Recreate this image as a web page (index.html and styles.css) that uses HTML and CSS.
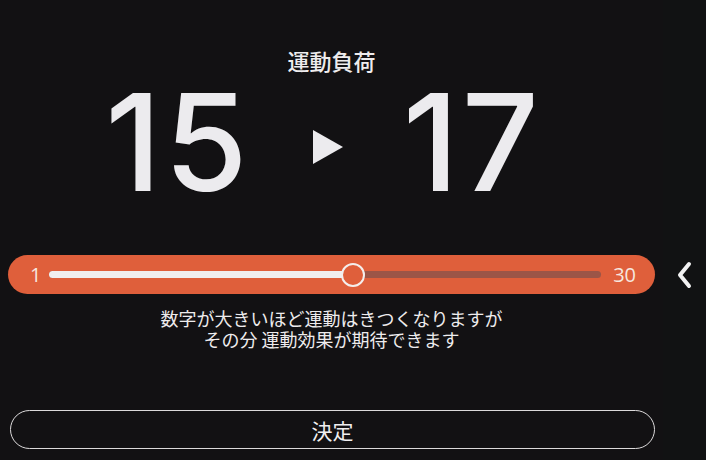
FILE: index.html
```html
<!DOCTYPE html>
<html lang="ja">
<head>
<meta charset="utf-8">
<link rel="stylesheet" href="styles.css">
</head>
<body>
<div class="page">
  <main class="main">
    <h1 class="title">運動負荷</h1>
    <div class="values">
      <span class="num">15</span>
      <span class="arrow"></span>
      <span class="num">17</span>
    </div>
    <div class="slider">
      <span class="lbl lbl-min">1</span>
      <div class="track">
        <div class="fill" style="width: 55%"></div>
        <div class="thumb" style="left: 55%"></div>
      </div>
      <span class="lbl lbl-max">30</span>
    </div>
    <p class="desc">数字が大きいほど運動はきつくなりますが<br>その分 運動効果が期待できます</p>
    <button class="ok">決定</button>
  </main>
  <aside class="side">
    <svg class="chev" width="18" height="30" viewBox="0 0 18 30"><path d="M14 4 L5 15 L14 26" fill="none" stroke="#f2f2f2" stroke-width="4" stroke-linecap="round" stroke-linejoin="round"/></svg>
  </aside>
</div>
</body>
</html>
```
FILE: styles.css
```css
* { box-sizing: border-box; }
html, body { margin: 0; padding: 0; }
body {
  background: #121113;
  color: #eeeced;
  font-family: "Noto Sans CJK JP", "Noto Sans", sans-serif;
  width: 706px;
  height: 460px;
  overflow: hidden;
}
.page { display: flex; height: 460px; }
.main {
  width: 663px;
  padding: 45px 8px 0 8px;
  display: flex;
  flex-direction: column;
  align-items: stretch;
}
.side {
  flex: 1;
  background: #111213;
  padding: 260px 0 0 12px;
}
.title {
  margin: 0;
  font-size: 22px;
  line-height: 30px;
  font-weight: 500;
  text-align: center;
}
.values {
  margin-top: -2px;
  display: flex;
  justify-content: center;
  align-items: center;
  font-family: "Inter", "Open Sans", sans-serif;
  font-weight: 450;
  font-size: 135px;
  line-height: 1;
  height: 138px;
  color: #ecebee;
  padding-right: 16px;
}
.num { display: block; letter-spacing: 3px; }
.arrow {
  width: 0; height: 0;
  border-left: 30px solid #ecebee;
  border-top: 17px solid transparent;
  border-bottom: 17px solid transparent;
  margin: 10px 60px 0 62px;
}
.slider {
  margin-top: 44px;
  height: 39px;
  border-radius: 20px;
  background: #df5f3b;
  display: flex;
  align-items: center;
  padding: 0 19px 0 22px;
  font-family: "Open Sans", sans-serif;
  font-size: 20px;
  color: #f6e6df;
}
.lbl-min { margin-right: 8px; }
.lbl-max { margin-left: 12px; }
.track {
  flex: 1;
  position: relative;
  height: 7px;
  border-radius: 4px;
  background: #9b5547;
}
.fill {
  height: 100%;
  border-radius: 4px;
  background: #f1efef;
}
.thumb {
  position: absolute;
  top: 50%;
  width: 24px; height: 24px;
  margin: -12px 0 0 -12px;
  border-radius: 50%;
  background: #df5f3b;
  border: 2px solid #f4eeec;
}
.desc {
  margin: 14px 0 0;
  text-align: center;
  font-size: 18px;
  line-height: 21px;
  color: #eeeced;
}
.ok {
  margin: 60px 0 0 2px;
  height: 39px;
  border: 1.5px solid #dcdadb;
  border-radius: 20px;
  background: transparent;
  color: #f0eef0;
  font-family: "Noto Sans CJK JP", sans-serif;
  font-size: 21px;
  padding: 0;
}
.chev { display: block; }
```
